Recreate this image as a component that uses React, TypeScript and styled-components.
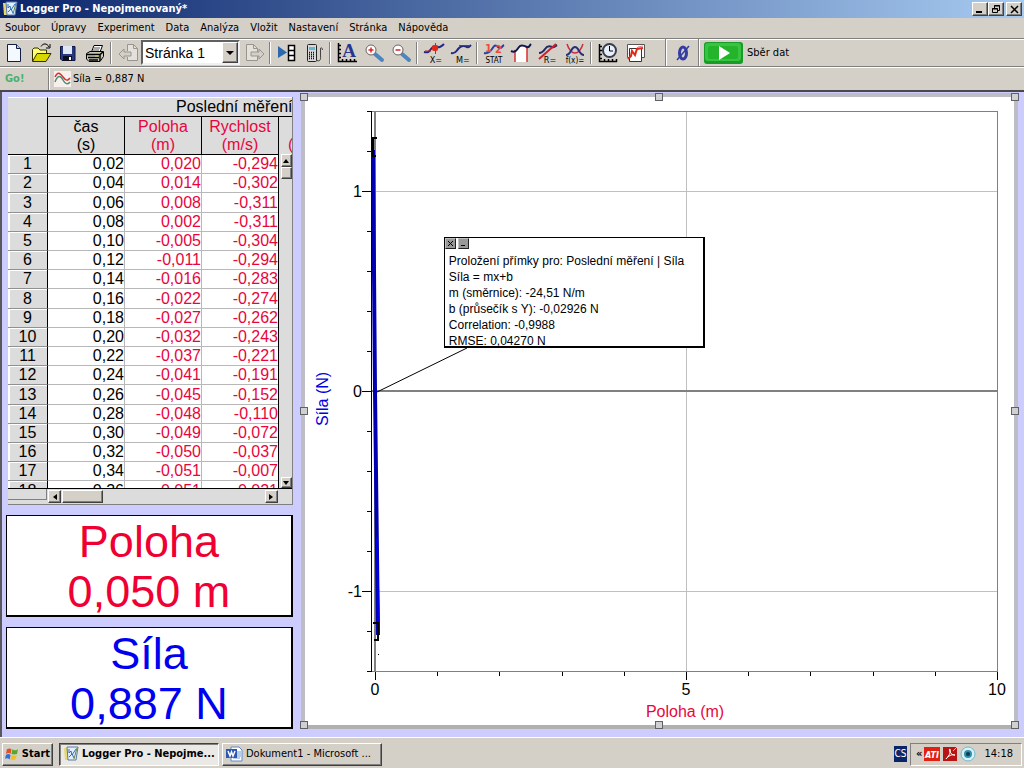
import React from 'react';
import styled, { createGlobalStyle, css } from 'styled-components';

const RED = '#e8053c';
const BLUE = '#0000e0';
const FACE = '#d4d0c8';

const Global = createGlobalStyle`
  * { box-sizing: border-box; }
  html, body, #root { height: 100%; }
  body {
    margin: 0;
    overflow: hidden;
    background: ${FACE};
    color: #000;
    font: 11px/14px "DejaVu Sans Condensed", "DejaVu Sans", sans-serif;
  }
  button, select { font: inherit; color: inherit; padding: 0; margin: 0; border-radius: 0; }
  svg { display: block; }
`;

const raised = css`
  background: ${FACE};
  border: 1px solid;
  border-color: #fff #404040 #404040 #fff;
  box-shadow: inset -1px -1px 0 #808080;
`;

const Screen = styled.div`
  display: flex;
  flex-direction: column;
  height: 100vh;
`;

const TitleBar = styled.header`
  display: flex;
  align-items: center;
  gap: 2px;
  height: 18px;
  padding: 0 2px;
  background: linear-gradient(90deg, #0a246a, #a6caf0);
  color: #fff;
`;

const Title = styled.h1`
  flex: 1;
  margin: 0;
  font-size: 11px;
  font-weight: bold;
`;

const WindowButtons = styled.div`
  display: flex;
  button:last-child { margin-left: 2px; }
`;

const WindowButton = styled.button`
  ${raised}
  display: grid;
  place-items: center;
  width: 16px;
  height: 14px;
`;

const MenuBar = styled.nav`
  display: flex;
  align-items: center;
  gap: 11px;
  height: 20px;
  padding: 0 5px;
`;

const MenuItem = styled.button`
  border: 0;
  background: none;
`;

const Toolbar = styled.div`
  display: flex;
  align-items: center;
  height: 29px;
  border-top: 1px solid #808080;
  border-bottom: 1px solid #808080;
  box-shadow: inset 0 1px 0 #fff;
`;

const ToolButton = styled.button`
  display: grid;
  place-items: center;
  width: 27px;
  height: 26px;
  border: 0;
  background: none;
`;

const Separator = styled.span<{ $full?: boolean }>`
  width: 2px;
  height: ${p => (p.$full ? 27 : 22)}px;
  margin: 0 2px;
  border-left: 1px solid #808080;
  border-right: 1px solid #fff;
`;

const ToolGap = styled.span`
  width: 15px;
`;

const PageSelect = styled.div`
  position: relative;
  width: 99px;
  height: 25px;
`;

const PageBox = styled.select`
  appearance: none;
  width: 100%;
  height: 100%;
  padding: 0 2px;
  border: 2px solid;
  border-color: #606060 #f0f0f0 #f0f0f0 #606060;
  background: #fff;
  font: 14px "Liberation Sans", Arial, sans-serif;
`;

const PageArrow = styled.span`
  ${raised}
  position: absolute;
  top: 2px;
  right: 2px;
  display: grid;
  place-items: center;
  width: 16px;
  height: 21px;
  pointer-events: none;
`;

const Collect = styled.button`
  display: flex;
  align-items: center;
  gap: 4px;
  margin-left: 2px;
  border: 0;
  background: none;
`;

const SensorBar = styled.div`
  display: flex;
  align-items: center;
  height: 25px;
  border-top: 1px solid #fff;
  border-bottom: 2px solid #48484c;
`;

const GoLabel = styled.strong`
  width: 49px;
  padding-left: 5px;
  color: #4caf6c;
  font-size: 11px;
  line-height: 22px;
  border-right: 1px solid #808080;
`;

const SensorValue = styled.span`
  display: flex;
  align-items: center;
  gap: 2px;
  height: 22px;
  padding-left: 4px;
  border-left: 1px solid #fff;
`;

const Workspace = styled.main`
  flex: 1;
  min-height: 0;
  display: grid;
  grid-template-columns: minmax(0, 2fr) minmax(0, 5fr);
  gap: 8px;
  padding: 1px 6px 8px 4px;
  border-left: 2px solid #58585c;
  background: #ccccff;
`;

const LeftColumn = styled.section`
  display: flex;
  flex-direction: column;
  gap: 10px;
  min-height: 0;
  padding: 4px 0 0;
`;

const TablePanel = styled.div`
  flex: 1;
  min-height: 0;
  display: flex;
  flex-direction: column;
  margin-left: 2px;
  border-right: 1px solid #808080;
  border-bottom: 1px solid #808080;
  background: #dcdcdc;
`;

const TableView = styled.div`
  position: relative;
  flex: 1;
  min-height: 0;
  overflow: hidden;
  border-bottom: 1px solid #000;
`;

const DataTable = styled.table`
  table-layout: fixed;
  width: 348px;
  border-collapse: separate;
  border-spacing: 0;
  font: 16px/18px "Liberation Sans", Arial, sans-serif;
  tbody tr { height: 19px; }
  tbody tr:nth-child(5n + 3) { height: 20px; }
`;

const Corner = styled.th`
  border-right: 1px solid #000;
  border-bottom: 1px solid #000;
  border-top: 1px solid #fff;
`;

const SetHead = styled.th`
  height: 20px;
  padding: 0 0 0 128px;
  border-bottom: 1px solid #000;
  border-top: 1px solid #fff;
  font-weight: normal;
  text-align: left;
  white-space: nowrap;
`;

const ColumnHead = styled.th<{ $color: string; $edge?: boolean }>`
  height: 38px;
  padding: 0 0 0 ${p => (p.$edge ? 9 : 0)}px;
  border-bottom: 1px solid #000;
  border-right: 1px solid #000;
  color: ${p => p.$color};
  font-weight: normal;
  text-align: ${p => (p.$edge ? 'left' : 'center')};
  span { display: block; min-height: 18px; }
`;

const RowHead = styled.th`
  padding: 0;
  border-right: 1px solid #000;
  border-bottom: 1px solid #909090;
  box-shadow: inset 2px 1px 0 #fff;
  font-weight: normal;
`;

const Cell = styled.td<{ $color: string }>`
  padding: 0;
  border-right: 1px solid #b8b8b8;
  border-bottom: 1px solid #b8b8b8;
  background: #fff;
  color: ${p => p.$color};
  text-align: right;
`;

const VScroll = styled.div`
  position: absolute;
  top: 57px;
  right: 0;
  bottom: 0;
  display: flex;
  flex-direction: column;
  width: 14px;
  padding-left: 2px;
  border-left: 1px solid #000;
  background: #dcdcdc;
`;

const Spacer = styled.span`
  flex: 1;
`;

const ScrollButton = styled.button<{ $w: number; $h: number }>`
  ${raised}
  flex: none;
  display: grid;
  place-items: center;
  width: ${p => p.$w}px;
  height: ${p => p.$h}px;
`;

const HScroll = styled.div`
  display: flex;
  align-items: center;
  gap: 1px;
  height: 15px;
  padding-right: 14px;
`;

const HScrollCorner = styled.span`
  align-self: flex-start;
  width: 39px;
  height: 11px;
  border-right: 1px solid #808080;
  border-bottom: 1px solid #808080;
`;

const Meter = styled.section<{ $color: string }>`
  flex: none;
  height: 102px;
  border: 1px solid #000;
  border-right-width: 2px;
  border-bottom-width: 2px;
  background: #fff;
  color: ${p => p.$color};
  font: 45px/51px "Liberation Sans", Arial, sans-serif;
  text-align: center;
`;

const MeterLine = styled.div`
  height: 50px;
`;

const GraphPanel = styled.section`
  position: relative;
  min-height: 0;
  border: 4px solid #bdbdc6;
  border-bottom-color: #b0b0b0;
  background: #fff;
`;

const Handle = styled.span<{ $x: number; $y: number }>`
  position: absolute;
  left: calc(${p => p.$x}% + ${p => (p.$x === 0 ? -5 : p.$x === 100 ? -3 : -4)}px);
  top: calc(${p => p.$y}% - 4px);
  width: 8px;
  height: 8px;
  border: 1px solid #606068;
  background: #d0d0d0;
`;

const Chart = styled.svg`
  width: 100%;
  height: 100%;
  font: 16px "Liberation Sans", Arial, sans-serif;
`;

const FitBox = styled.aside`
  position: absolute;
  left: 139px;
  top: 140px;
  width: 261px;
  height: 111px;
  border: 1px solid #000;
  border-right-width: 2px;
  border-bottom-width: 2px;
  background: #fff;
  font: 12px/16px "Liberation Sans", Arial, sans-serif;
`;

const FitButtons = styled.div`
  display: flex;
  gap: 2px;
  height: 11px;
`;

const FitButton = styled.button`
  display: grid;
  place-items: center;
  width: 11px;
  height: 11px;
  border: 1px solid;
  border-color: #c0c0c0 #202020 #202020 #c0c0c0;
  background: #989898;
`;

const FitLines = styled.div`
  padding: 4px 0 0 4px;
  white-space: nowrap;
`;

const Taskbar = styled.footer`
  display: flex;
  align-items: center;
  gap: 3px;
  height: 31px;
  padding: 2px 2px 0;
  border-top: 1px solid #fff;
`;

const TaskButton = styled.button<{ $w: number; $down?: boolean }>`
  ${raised}
  display: flex;
  align-items: center;
  gap: 3px;
  width: ${p => p.$w}px;
  height: 23px;
  padding: 0 3px;
  white-space: nowrap;
  font-weight: ${p => (p.$down ? 'bold' : 'normal')};
  ${p =>
    p.$down &&
    css`
      background: #ebe9e5;
      border-color: #404040 #fff #fff #404040;
      box-shadow: inset 1px 1px 0 #808080;
    `}
`;

const StartButton = styled(TaskButton)`
  margin-right: 3px;
  gap: 2px;
  padding: 0 2px;
  font-weight: bold;
`;

const Language = styled.span`
  display: grid;
  place-items: center;
  width: 13px;
  height: 16px;
  margin-left: auto;
  background: #0a246a;
  color: #fff;
  font-size: 10px;
`;

const Tray = styled.div`
  display: flex;
  align-items: center;
  gap: 2px;
  height: 23px;
  padding: 0 8px 0 5px;
  border: 1px solid;
  border-color: #808080 #fff #fff #808080;
`;

const Clock = styled.time`
  margin-left: 6px;
`;

const WaveCurve = 'M2 11 C5 11 6 10 8 7 S13 4 15 5 S18 4 20 3';

const icons = {
  fresh: (
    <>
      <path d="M4.500 2.500H13.500L17.500 6.500V19.500H4.500Z" fill="#f4f8ff" stroke="#111c48" />
      <path d="M13.500 2.500V6.500H17.500" fill="#bccbe8" stroke="#111c48" />
    </>
  ),
  open: (
    <>
      <path d="M2.500 19V7.500L4 6H8L10 8H16.500V11" fill="#ffff70" stroke="#303000" />
      <path d="M2.500 19.500L7 11.500H21L16 19.500Z" fill="#d8d800" stroke="#303000" />
      <path d="M11 4.500C13 1 17 1 19 5M20 2V6H16" fill="none" stroke="#000" />
    </>
  ),
  save: (
    <>
      <path d="M3.500 4.500H18V18.500H5L3.500 17Z" fill="#283880" stroke="#0c1440" />
      <rect x="6" y="4" width="9" height="8" fill="#dfe6f4" />
      <rect x="6" y="14" width="9" height="5" fill="#0c0c20" />
      <rect x="12" y="15" width="2" height="3" fill="#fff" />
    </>
  ),
  print: (
    <>
      <path d="M7.500 10L10 3.500H18.500L16 10" fill="#fff" stroke="#000" />
      <path d="M10 6H16M9 8H15" stroke="#555" />
      <path d="M2.500 11.500L6 9.500H19.500V14.500L16 19.500H5L2.500 17Z" fill="#c8c8b8" stroke="#000" />
      <path d="M3 12.500H16L19 10M4 15.500H15M5 18H14M16 12.500V19" fill="none" stroke="#000" strokeWidth="1.500" />
      <path d="M11 14H14" stroke="#dd0" />
    </>
  ),
  back: (
    <>
      <path d="M10.500 9V2.500H16.500L20.500 6.500V18.500H10.500V15" fill="#e4e1da" stroke="#989590" />
      <path d="M16.500 2.500V6.500H20.500" fill="none" stroke="#989590" />
      <path d="M2 12L7 7V10H14V14H7V17Z" fill="#d4d0c8" stroke="#989590" />
    </>
  ),
  forward: (
    <>
      <path d="M3.500 2.500H10.500L14.500 6.500V18.500H3.500Z" fill="#e4e1da" stroke="#989590" />
      <path d="M10.500 2.500V6.500H14.500" fill="none" stroke="#989590" />
      <path d="M21 12L16 7V10H8V14H16V17Z" fill="#d4d0c8" stroke="#989590" />
    </>
  ),
  importData: (
    <>
      <path d="M2 4L11 10.500L2 16Z" fill="#2c68b0" />
      <path d="M12.500 3.500H18.500V18.500H12.500ZM12.500 8.500H18.500M12.500 13.500H18.500" fill="#fff" stroke="#000" strokeWidth="1.500" />
    </>
  ),
  calculator: (
    <>
      <rect x="4.500" y="2.500" width="9" height="17" rx="1" fill="#d8d8d8" stroke="#222" />
      <rect x="6" y="5" width="6" height="3" fill="#60b8d0" />
      <path d="M6 10.500H12M6 12.500H12M6 14.500H12M6 16.500H12" stroke="#111" strokeDasharray="1 1" strokeWidth="1.500" />
      <path d="M14 18.500C17 20 18 17 17.500 14V7C17.500 5 19 5 19.500 8" fill="none" stroke="#444" />
    </>
  ),
  autoscale: (
    <>
      <path d="M2.500 1V19.500H21M2 3.500H5M2 7.500H5M2 11.500H5M2 15.500H5M6.500 17V20M10.500 17V20M14.500 17V20M18.500 17V20" fill="none" stroke="#000" strokeWidth="1.500" />
      <text x="13" y="15" fontFamily="Liberation Serif, serif" fontSize="19" fontWeight="bold" textAnchor="middle" fill="#28358c">A</text>
    </>
  ),
  zoomIn: (
    <>
      <path d="M12 12L19 18" stroke="#4c86bc" strokeWidth="4" strokeLinecap="round" />
      <circle cx="8" cy="8" r="5" fill="#fff" stroke="#6c6060" />
      <path d="M5.500 8H10.500M8 5.500V10.500" stroke="#e02020" strokeWidth="1.500" />
    </>
  ),
  zoomOut: (
    <>
      <path d="M12 12L19 18" stroke="#4c86bc" strokeWidth="4" strokeLinecap="round" />
      <circle cx="8" cy="8" r="5" fill="#fff" stroke="#6c6060" />
      <path d="M5.500 8H10.500" stroke="#e02020" strokeWidth="1.500" />
    </>
  ),
  examine: (
    <>
      <path d="M1 10C5 11 6 10 8 7S13 4 15 5S19 4 21 2" fill="none" stroke="#222a80" strokeWidth="2" />
      <path d="M2 9H8M12.500 1V12" stroke="#d02020" />
      <rect x="9" y="3" width="6" height="6" rx="2" fill="#e02818" />
    </>
  ),
  tangent: (
    <>
      <path d="M1 11C6 12 6 9 9 6S15 4 17 5S20 4 21 3" fill="none" stroke="#222a80" strokeWidth="2" />
      <path d="M9 3.500H19" stroke="#803050" />
    </>
  ),
  stat: (
    <>
      <path d="M1 11C5 12 7 10 9 7S12 2 15 5S19 4 21 3" fill="none" stroke="#2840a0" strokeWidth="2" />
      <text x="2" y="10" fontSize="11" fontWeight="bold" fill="#f04c34">1</text>
      <text x="12" y="11" fontSize="11" fontWeight="bold" fill="#f04c34">2</text>
    </>
  ),
  integral: (
    <>
      <path d="M5 8L12 4L17 6V20H5Z" fill="#fff" />
      <path d="M5 8V20M17 5V20" stroke="#d83030" strokeWidth="1.500" />
      <path d="M1 9C5 11 7 8 9 5S15 4 17 5S20 3 21 2" fill="none" stroke="#101850" strokeWidth="2" />
    </>
  ),
  regression: (
    <>
      <path d={WaveCurve} fill="none" stroke="#222a60" strokeWidth="2" />
      <path d="M2 17L19 2" stroke="#d02030" strokeWidth="2" />
    </>
  ),
  curveFit: (
    <>
      <path d="M3 2C5 8 8 11 11 11S17 8 19 2" fill="none" stroke="#c83040" strokeWidth="1.500" />
      <path d="M2 13C7 13 7 5 11 5S15 13 20 13" fill="none" stroke="#28307c" strokeWidth="2" />
    </>
  ),
  timing: (
    <>
      <path d="M2.500 2V19.500H20M2 4.500H5M2 8.500H5M2 12.500H5M2 16.500H5M7.500 17V20M11.500 17V20M15.500 17V20M19.500 17V20" fill="none" stroke="#000" strokeWidth="1.500" />
      <circle cx="12.500" cy="8.500" r="6.500" fill="#e8f0fa" stroke="#383c50" strokeWidth="2" />
      <path d="M12.500 4V9H16" fill="none" stroke="#000" />
    </>
  ),
  graphs: (
    <>
      <path d="M3.500 2.500H20.500V15.500H3.500Z" fill="#fff" stroke="#555" />
      <path d="M5 12L8 7L11 9L14 5L19 4" fill="none" stroke="#e08080" />
      <path d="M5.500 6.500H17.500V19.500H5.500Z" fill="#fff" stroke="#333" />
      <path d="M4 17L7 14L8 9L11 13L13 7L19 6" fill="none" stroke="#e02818" strokeWidth="2" />
    </>
  ),
  zero: (
    <>
      <ellipse cx="11" cy="11" rx="3.500" ry="6" fill="none" stroke="#343ca4" strokeWidth="3" />
      <path d="M5 18L17 4" stroke="#343ca4" strokeWidth="1.500" />
    </>
  ),
};

const captions: Partial<Record<keyof typeof icons, string>> = {
  examine: 'X=',
  tangent: 'M=',
  stat: 'STAT',
  regression: 'R=',
  curveFit: 'f(x)=',
};

type IconName = keyof typeof icons;

function Tool({ name, label }: { name: IconName; label: string }) {
  const caption = captions[name];
  const wide = name === 'stat' || name === 'curveFit';
  return (
    <ToolButton aria-label={label}>
      <svg width="22" height="22" viewBox="0 0 22 22">
        {icons[name]}
        {caption && (
          <text x={wide ? 11 : 13} y="21" fontSize={wide ? 8 : 9} textAnchor="middle" fill="#000">
            {caption}
          </text>
        )}
      </svg>
    </ToolButton>
  );
}

const LoggerIcon = () => (
  <svg width="16" height="16" viewBox="0 0 16 16">
    <path d="M1 2H5V14H2Z" fill="#e8d870" />
    <path d="M4 1H15L13 14H5Z" fill="#e4eefa" stroke="#5878a8" />
    <path d="M6 3V7L8 5L9 9L13 3M6 11L9 8L11 12" fill="none" stroke="#2870c0" />
    <path d="M14 2L11 13" stroke="#608848" />
  </svg>
);

const Triangle = ({ points }: { points: string }) => (
  <svg width="8" height="8" viewBox="0 0 8 8">
    <polygon points={points} />
  </svg>
);

const rows: [string, string, string][] = [
  ['0,02', '0,020', '-0,294'],
  ['0,04', '0,014', '-0,302'],
  ['0,06', '0,008', '-0,311'],
  ['0,08', '0,002', '-0,311'],
  ['0,10', '-0,005', '-0,304'],
  ['0,12', '-0,011', '-0,294'],
  ['0,14', '-0,016', '-0,283'],
  ['0,16', '-0,022', '-0,274'],
  ['0,18', '-0,027', '-0,262'],
  ['0,20', '-0,032', '-0,243'],
  ['0,22', '-0,037', '-0,221'],
  ['0,24', '-0,041', '-0,191'],
  ['0,26', '-0,045', '-0,152'],
  ['0,28', '-0,048', '-0,110'],
  ['0,30', '-0,049', '-0,072'],
  ['0,32', '-0,050', '-0,037'],
  ['0,34', '-0,051', '-0,007'],
  ['0,36', '-0,051', '-0,021'],
];

const menus = ['Soubor', 'Úpravy', 'Experiment', 'Data', 'Analýza', 'Vložit', 'Nastavení', 'Stránka', 'Nápověda'];

const fit = [
  'Proložení přímky pro: Poslední měření | Síla',
  'Síla = mx+b',
  'm (směrnice): -24,51 N/m',
  'b (průsečík s Y): -0,02926 N',
  'Correlation: -0,9988',
  'RMSE: 0,04270 N',
];

const handles: [number, number][] = [
  [0, 0], [50, 0], [100, 0], [0, 50], [100, 50], [0, 100], [50, 100], [100, 100],
];

const plotX = (v: number) => 70 + Math.round(v * 62.2);
const plotY = (v: number) => 294 - Math.round(v * 200);
const yTicks = Array.from({ length: 15 }, (_, i) => (i - 7) / 5);
const xTicks = Array.from({ length: 11 }, (_, i) => i);

function ForceChart() {
  return (
    <Chart viewBox="0 0 709 628" preserveAspectRatio="xMinYMin meet" role="img" aria-label="Síla (N) / Poloha (m)">
      <g shapeRendering="crispEdges" fill="none">
        <path d="M67 14.500H692.500V574" stroke="#808080" />
        <path d="M67 574H693" stroke="#808080" />
        <path d="M70 94.500H692M70 494.500H692M381.500 15V574" stroke="#c0c0c0" />
        <path d="M66 294H693" stroke="#808080" strokeWidth="2" />
        <path d="M70 14V574" stroke="#808080" strokeWidth="2" />
        <path d="M66.500 14V575" stroke="#000" />
        {yTicks.map(v => (
          <path key={v} d={`M${Math.abs(v) === 1 || v === 0 ? 57 : 62} ${plotY(v)}.500H67`} stroke="#000" />
        ))}
        {xTicks.map(v => (
          <path key={v} d={`M${plotX(v)}.500 575V${v % 5 ? 579 : 583}`} stroke="#000" />
        ))}
      </g>
      <path d="M68 53L70 294L73 538" fill="none" stroke="#0000b0" strokeWidth="4" />
      <path d="M72 440L74 536" fill="none" stroke="#0000f0" strokeWidth="2" />
      <g shapeRendering="crispEdges" fill="none" stroke="#000" strokeWidth="2">
        <path d="M72 41H68V59H71" />
        <path d="M68 526H73V543H69" />
      </g>
      <rect x="73" y="557" width="1" height="1" />
      <path d="M72 295L162 251" stroke="#000" />
      <text x="57" y="100" textAnchor="end">1</text>
      <text x="57" y="300" textAnchor="end">0</text>
      <text x="57" y="500" textAnchor="end">-1</text>
      <text x="70" y="598" textAnchor="middle">0</text>
      <text x="381" y="598" textAnchor="middle">5</text>
      <text x="692" y="598" textAnchor="middle">10</text>
      <text x="380" y="620" textAnchor="middle" fill={RED}>Poloha (m)</text>
      <text x="23" y="302" textAnchor="middle" fill={BLUE} transform="rotate(-90 23 302)">Síla (N)</text>
    </Chart>
  );
}

function MeasurementTable() {
  return (
    <TablePanel>
      <TableView>
        <DataTable>
          <colgroup>
            <col width={40} />
            <col span={4} width={77} />
          </colgroup>
          <thead>
            <tr>
              <Corner rowSpan={2} />
              <SetHead colSpan={4}>Poslední měření</SetHead>
            </tr>
            <tr>
              <ColumnHead $color="#000"><span>čas</span><span>(s)</span></ColumnHead>
              <ColumnHead $color={RED}><span>Poloha</span><span>(m)</span></ColumnHead>
              <ColumnHead $color={RED}><span>Rychlost</span><span>(m/s)</span></ColumnHead>
              <ColumnHead $color={RED} $edge><span /><span>(m/s²)</span></ColumnHead>
            </tr>
          </thead>
          <tbody>
            {rows.map(([time, position, velocity], i) => (
              <tr key={time}>
                <RowHead>{i + 1}</RowHead>
                <Cell $color="#000">{time}</Cell>
                <Cell $color={RED}>{position}</Cell>
                <Cell $color={RED}>{velocity}</Cell>
              </tr>
            ))}
          </tbody>
        </DataTable>
        <VScroll>
          <ScrollButton $w={11} $h={13} aria-label="Nahoru"><Triangle points="4,2 7,6 1,6" /></ScrollButton>
          <ScrollButton $w={11} $h={12} aria-label="Posuvník" />
          <Spacer />
          <ScrollButton $w={11} $h={11} aria-label="Dolů"><Triangle points="1,2 7,2 4,6" /></ScrollButton>
        </VScroll>
      </TableView>
      <HScroll>
        <HScrollCorner />
        <ScrollButton $w={13} $h={13} aria-label="Vlevo"><Triangle points="6,1 6,7 2,4" /></ScrollButton>
        <ScrollButton $w={41} $h={13} aria-label="Posuvník" />
        <Spacer />
        <ScrollButton $w={13} $h={13} aria-label="Vpravo"><Triangle points="2,1 2,7 6,4" /></ScrollButton>
      </HScroll>
    </TablePanel>
  );
}

export default function App() {
  return (
    <Screen>
      <Global />
      <TitleBar>
        <LoggerIcon />
        <Title>Logger Pro - Nepojmenovaný*</Title>
        <WindowButtons>
          <WindowButton aria-label="Minimalizovat">
            <svg width="10" height="9"><path d="M1 7H7" stroke="#000" strokeWidth="2" /></svg>
          </WindowButton>
          <WindowButton aria-label="Obnovit">
            <svg width="10" height="10"><path d="M3.500 4V1.500H8.500V6.500H7M3 2H9M1.500 4.500H6.500V8.500H1.500ZM1 5H7" fill="none" stroke="#000" /></svg>
          </WindowButton>
          <WindowButton aria-label="Zavřít">
            <svg width="9" height="9"><path d="M1 1L8 8M8 1L1 8" stroke="#000" strokeWidth="1.500" /></svg>
          </WindowButton>
        </WindowButtons>
      </TitleBar>
      <MenuBar>
        {menus.map(m => <MenuItem key={m}>{m}</MenuItem>)}
      </MenuBar>
      <Toolbar>
        <Tool name="fresh" label="Nový" />
        <Tool name="open" label="Otevřít" />
        <Tool name="save" label="Uložit" />
        <Tool name="print" label="Tisk" />
        <Separator />
        <Tool name="back" label="Předchozí stránka" />
        <PageSelect>
          <PageBox aria-label="Stránka"><option>Stránka 1</option></PageBox>
          <PageArrow><Triangle points="0,2 8,2 4,6" /></PageArrow>
        </PageSelect>
        <Tool name="forward" label="Další stránka" />
        <Separator />
        <Tool name="importData" label="Data" />
        <Tool name="calculator" label="Kalkulačka" />
        <Separator />
        <Tool name="autoscale" label="Automatické měřítko" />
        <Tool name="zoomIn" label="Zvětšit" />
        <Tool name="zoomOut" label="Zmenšit" />
        <Separator />
        <Tool name="examine" label="Odečet hodnot" />
        <Tool name="tangent" label="Tečna" />
        <Separator />
        <Tool name="stat" label="Statistika" />
        <Tool name="integral" label="Integrál" />
        <Tool name="regression" label="Proložit přímku" />
        <Tool name="curveFit" label="Proložit křivku" />
        <Separator />
        <Tool name="timing" label="Sběr dat – nastavení" />
        <Tool name="graphs" label="Grafy" />
        <ToolGap />
        <Separator $full />
        <Tool name="zero" label="Vynulovat" />
        <Separator $full />
        <Collect>
          <svg width="39" height="22" viewBox="0 0 39 22">
            <rect x="0" y="0" width="39" height="22" rx="3" fill="#189c28" />
            <rect x="1" y="1" width="36" height="18" rx="3" fill="#38c440" />
            <rect x="4" y="4" width="30" height="13" rx="2" fill="#24b42c" />
            <path d="M15 4L26 11L15 18Z" fill="#fff" />
          </svg>
          Sběr dat
        </Collect>
      </Toolbar>
      <SensorBar>
        <GoLabel>Go!</GoLabel>
        <SensorValue>
          <svg width="17" height="16" viewBox="0 0 17 16">
            <rect width="17" height="16" fill="#f8f0ec" />
            <path d="M1 6C4 0 6 2 9 6S14 10 16 7" fill="none" stroke="#d83030" strokeWidth="1.500" />
            <path d="M1 11C4 3 7 5 9 9S14 14 16 11" fill="none" stroke="#489078" strokeWidth="1.500" />
          </svg>
          Síla = 0,887 N
        </SensorValue>
      </SensorBar>
      <Workspace>
        <LeftColumn>
          <MeasurementTable />
          <Meter $color="#f00032">
            <MeterLine>Poloha</MeterLine>
            <MeterLine>0,050 m</MeterLine>
          </Meter>
          <Meter $color="#0000f0">
            <MeterLine>Síla</MeterLine>
            <MeterLine>0,887 N</MeterLine>
          </Meter>
        </LeftColumn>
        <GraphPanel>
          <ForceChart />
          <FitBox>
            <FitButtons>
              <FitButton aria-label="Zavřít"><svg width="7" height="7"><path d="M1 1L6 6M6 1L1 6" stroke="#000" /></svg></FitButton>
              <FitButton aria-label="Minimalizovat"><svg width="7" height="7"><path d="M1 5.500H5" stroke="#000" /></svg></FitButton>
            </FitButtons>
            <FitLines>{fit.map(line => <div key={line}>{line}</div>)}</FitLines>
          </FitBox>
          {handles.map(([x, y]) => <Handle key={`${x}-${y}`} $x={x} $y={y} />)}
        </GraphPanel>
      </Workspace>
      <Taskbar>
        <StartButton $w={51}>
          <svg width="16" height="16" viewBox="0 0 16 16">
            <path d="M2 3Q5 1 7 3L6 8Q4 6 1 8Z" fill="#e85020" />
            <path d="M8 3Q11 5 14 3L13 8Q10 9 7 8Z" fill="#58a830" />
            <path d="M1 9Q4 7 6 9L5 14Q3 12 0 13Z" fill="#3070d8" />
            <path d="M7 9Q10 11 13 9L11 14Q9 15 6 14Z" fill="#f0c020" />
          </svg>
          Start
        </StartButton>
        <TaskButton $w={160} $down>
          <LoggerIcon />
          Logger Pro - Nepojme...
        </TaskButton>
        <TaskButton $w={160}>
          <svg width="17" height="16" viewBox="0 0 17 16">
            <path d="M5 1H13L16 4V15H5Z" fill="#fff" stroke="#6088c8" />
            <path d="M11 6H15M11 8H15M11 10H15M7 12H14" stroke="#7098d8" />
            <rect x="0" y="3" width="11" height="9" fill="#2c58b0" />
            <path d="M2 5L4 10L5.500 6L7 10L9 5" fill="none" stroke="#fff" strokeWidth="1.500" />
          </svg>
          Dokument1 - Microsoft ...
        </TaskButton>
        <Language>CS</Language>
        <Tray>
          <strong>«</strong>
          <svg width="16" height="16" viewBox="0 0 16 16">
            <rect y="1" width="16" height="14" fill="#e02010" />
            <text x="8" y="12" textAnchor="middle" fontSize="9" fontWeight="bold" fontStyle="italic" fill="#fff">ATI</text>
          </svg>
          <svg width="16" height="16" viewBox="0 0 16 16">
            <rect x="1" y="1" width="14" height="14" fill="#b81414" />
            <path d="M4 13C8 9 9 5 8 3C6 3 9 10 13 9C10 8 6 10 4 13" fill="none" stroke="#fff" />
            <path d="M11 5L15 1" stroke="#f0c0c0" />
          </svg>
          <svg width="16" height="16" viewBox="0 0 16 16">
            <circle cx="8" cy="8" r="7" fill="#d8f0f8" stroke="#70b8c8" />
            <circle cx="8" cy="8" r="4" fill="#3090a8" />
            <circle cx="8" cy="8" r="2" fill="#103850" />
          </svg>
          <Clock>14:18</Clock>
        </Tray>
      </Taskbar>
    </Screen>
  );
}
